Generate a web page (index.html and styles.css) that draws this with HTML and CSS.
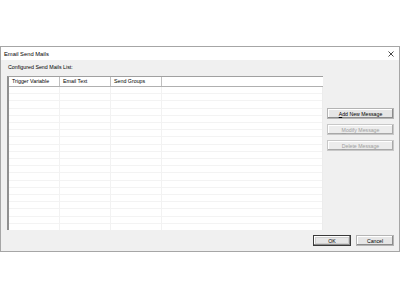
FILE: index.html
```html
<!DOCTYPE html>
<html>
<head>
<meta charset="utf-8">
<link rel="stylesheet" href="styles.css">
</head>
<body>
<div class="dialog">
  <div class="titlebar">
    <span class="title">Email Send Mails</span>
    <svg class="close" width="6" height="6" viewBox="0 0 6 6"><path d="M0.5 0.5 L5.5 5.5 M5.5 0.5 L0.5 5.5" stroke="#333" stroke-width="0.9"/></svg>
  </div>
  <div class="content">
    <div class="main">
      <div class="left">
        <div class="label">Configured Send Mails List:</div>
        <div class="list">
          <div class="header">
            <div class="hcell c1">Trigger Variable</div>
            <div class="hcell c2">Email Text</div>
            <div class="hcell c3">Send Groups</div>
            <div class="hcell c4"></div>
          </div>
          <div class="rows">
            <div class="col c1"></div>
            <div class="col c2"></div>
            <div class="col c3"></div>
            <div class="col c4"></div>
          </div>
        </div>
      </div>
      <div class="side">
        <button class="btn"><span><u>A</u>dd New Message</span></button>
        <button class="btn disabled"><span><u>M</u>odify Message</span></button>
        <button class="btn disabled"><span><u>D</u>elete Message</span></button>
      </div>
    </div>
    <div class="footer">
      <button class="btn small default"><span>OK</span></button>
      <button class="btn small"><span>Cancel</span></button>
    </div>
  </div>
</div>
</body>
</html>
```
FILE: styles.css
```css
html, body {
  margin: 0;
  padding: 0;
  background: #ffffff;
}
body {
  padding-top: 46px;
  font-family: "Liberation Sans", Arial, sans-serif;
  font-size: 5.3px;
  color: #000;
}
.dialog {
  width: 398px;
  height: 204px;
  border: 1px solid #a6a6a6;
  background: #f0f0f0;
  display: flex;
  flex-direction: column;
}
.titlebar {
  height: 13px;
  background: #ffffff;
  display: flex;
  align-items: center;
  justify-content: space-between;
  padding: 0 5px 0 3px;
  flex: none;
}
.title {
  font-size: 5.8px;
}
.content {
  flex: 1;
  display: flex;
  flex-direction: column;
  padding: 3px 5px 5px 6px;
}
.main {
  flex: 1;
  display: flex;
}
.left {
  width: 316px;
  display: flex;
  flex-direction: column;
}
.label {
  height: 8px;
  line-height: 8px;
  padding-left: 1px;
  margin-bottom: 5px;
}
.list {
  flex: 1;
  background: #fff;
  border-left: 2px solid #8f8f8f;
  border-top: 1px solid #a0a0a0;
  display: flex;
  flex-direction: column;
}
.header {
  height: 9px;
  display: flex;
  border-bottom: 1px solid #b0b0b0;
}
.hcell {
  line-height: 9px;
  padding-left: 3px;
  border-right: 1px solid #c0c0c0;
  white-space: nowrap;
  overflow: hidden;
}
.c1, .c2, .c3 { width: 50px; flex: none; }
.hcell.c1, .hcell.c2, .hcell.c3 { width: 47px; }
.c4 { flex: 1; border-right: none; }
.rows {
  flex: 1;
  display: flex;
  background: repeating-linear-gradient(to bottom, #ffffff 0, #ffffff 6.2px, #f3f3f3 6.2px, #f3f3f3 7.2px);
  border-right: 1px solid #ececec;
}
.col {
  border-right: 1px solid #f2f2f2;
}
.col.c4 { border-right: none; }
.side {
  flex: 1;
  display: flex;
  flex-direction: column;
  align-items: flex-end;
  gap: 5px;
  padding-top: 45px;
}
.btn {
  width: 67px;
  height: 11px;
  padding: 0;
  margin: 0;
  display: flex;
  align-items: center;
  justify-content: center;
  font-family: "Liberation Sans", Arial, sans-serif;
  font-size: 5.2px;
  color: #000;
  background: #e6e6e6;
  border: 1px solid #b4b4b4;
  box-shadow: inset -1px -1px 0 #8c8c8c, inset 1px 1px 0 #ffffff;
  border-radius: 0;
}
.btn span {
  line-height: 6px;
}
.btn.disabled {
  color: #a0a0a0;
  background: #ececec;
  border-color: #c8c8c8;
  box-shadow: inset -1px -1px 0 #a8a8a8, inset 1px 1px 0 #ffffff;
}
.footer {
  display: flex;
  justify-content: flex-end;
  gap: 5px;
  margin-top: 5px;
}
.btn.small {
  width: 38px;
}
.btn.default {
  border: 1px solid #3a3a3a;
  box-shadow: inset -1px -1px 0 #8c8c8c, inset 1px 1px 0 #ffffff, inset 0 0 0 2px #d0d0d0;
}
```
